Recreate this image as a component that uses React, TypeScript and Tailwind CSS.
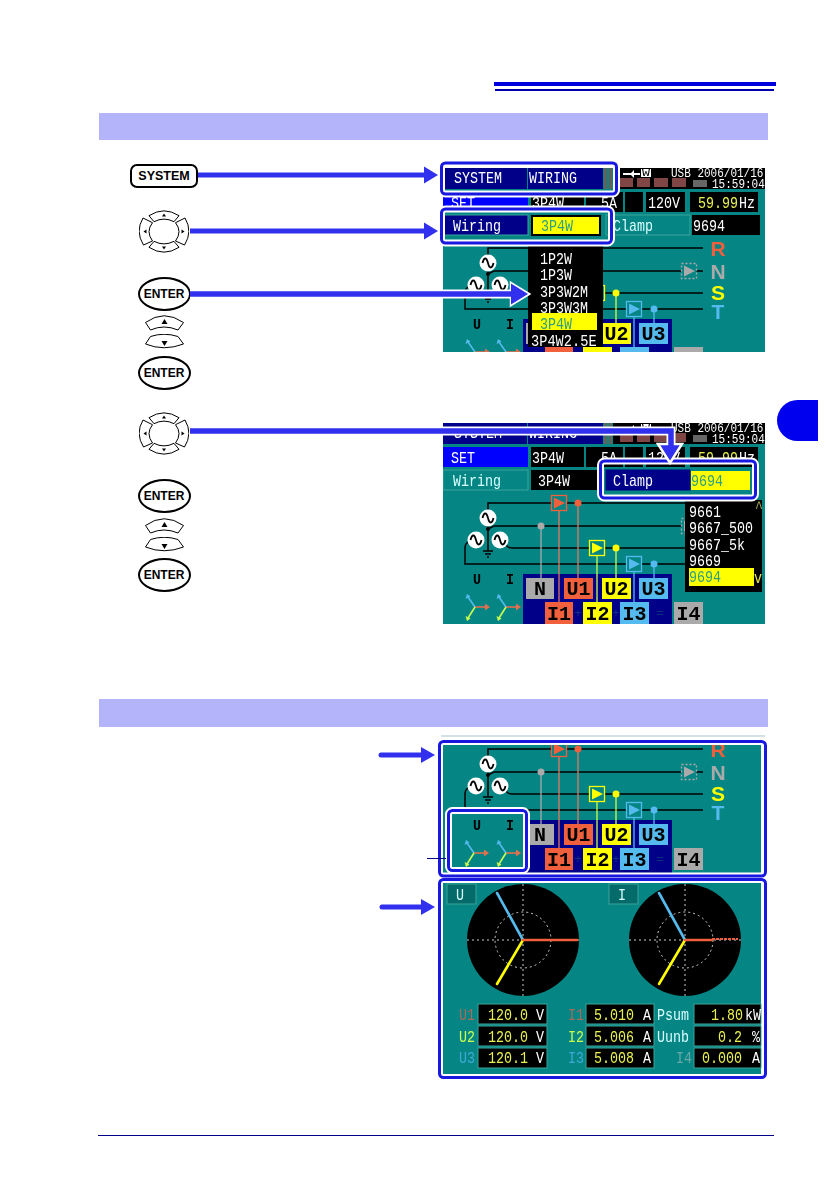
import React from "react";

const TEAL = "#068585";
const NAVY = "#000088";
const RED = "#f0603c";
const YELLOW = "#ffff00";
const LIME = "#c8ff50";
const SKY = "#55bbee";
const GREY = "#aaaaaa";
const FRAME = "#1818e0";

interface LabelProps {
  x: number;
  y: number;
  s: string;
  fill?: string;
  cw?: number;
  size?: number;
  bold?: boolean;
}

// Screen text: the instrument font is narrow and tall, so squeeze it to a char width
const Label = ({ x, y, s, fill = "#ffffff", cw = 8, size = 17, bold }: LabelProps) => (
  <text
    x={x}
    y={y}
    fill={fill}
    fontSize={size}
    fontWeight={bold ? 700 : 400}
    textLength={s.length * cw}
    lengthAdjust="spacingAndGlyphs"
  >
    {s}
  </text>
);

// Rounded callout frame with a white halo
const Frame = ({ x, y, w, h }: { x: number; y: number; w: number; h: number }) => (
  <>
    <rect x={x} y={y} width={w} height={h} rx={4} fill="none" stroke="#ffffff" strokeWidth={7} />
    <rect x={x} y={y} width={w} height={h} rx={4} fill="none" stroke={FRAME} strokeWidth={3} />
  </>
);

const Source = ({ x, y }: { x: number; y: number }) => (
  <>
    <circle cx={x} cy={y} r={8.5} fill="#ffffff" />
    <path d={`M${x - 5.5} ${y}c1.5 -6 4 -6 5.5 0s4 6 5.5 0`} fill="none" stroke="#000000" strokeWidth={1.8} />
  </>
);

const Sensor = ({ x, y, color, dashed }: { x: number; y: number; color: string; dashed?: boolean }) => (
  <>
    <rect
      x={x - 7.5}
      y={y - 7.5}
      width={15}
      height={15}
      fill={TEAL}
      stroke={color}
      strokeWidth={1.3}
      strokeDasharray={dashed ? "2 2" : undefined}
    />
    <path d={`M${x - 5} ${y - 5.5}L${x + 6} ${y}L${x - 5} ${y + 5.5}Z`} fill={color} />
  </>
);

const VectorIcon = ({ x, y }: { x: number; y: number }) => (
  <>
    <path d={`M${x} ${y}H${x + 11}`} stroke="#e07050" strokeWidth={1.6} />
    <path d={`M${x + 15} ${y}l-5 -3.5v7Z`} fill="#e07050" />
    <path d={`M${x} ${y}L${x - 7} ${y - 10}`} stroke={SKY} strokeWidth={1.6} />
    <path d={`M${x - 8} ${y - 13}l-1.5 5l5 -2.5Z`} fill={SKY} />
    <path d={`M${x} ${y}L${x - 7} ${y + 11}`} stroke={LIME} strokeWidth={1.6} />
    <path d={`M${x - 8} ${y + 14}l-1.5 -5l5 2.5Z`} fill={LIME} />
  </>
);

const Chip = ({ x, y, w, h, color, s }: { x: number; y: number; w: number; h: number; color: string; s?: string }) => (
  <>
    <rect x={x} y={y} width={w} height={h} fill={color} />
    {s && <Label x={x + (w - s.length * 12) / 2} y={y + h - 4} s={s} fill="#000000" cw={12} size={21} bold />}
  </>
);

const Legend = ({ x }: { x: number }) => (
  <>
    <Label x={473} y={830} s="U" fill="#000000" cw={8} size={15} bold />
    <Label x={506} y={830} s="I" fill="#000000" cw={8} size={15} bold />
    <VectorIcon x={x} y={853} />
    <VectorIcon x={506} y={853} />
  </>
);

interface DiagramProps {
  rails?: boolean;
  legend?: boolean;
  currents?: boolean;
}

// Wiring diagram, drawn in the coordinates of the section 2 panel
const WiringDiagram = ({ rails = true, legend = true, currents = true }: DiagramProps) => (
  <>
    <g fill="none" stroke="#000000" strokeWidth={1.5}>
      <path d="M488 756V749H703" />
      <path d="M488 775L494 772H703" />
      <path d="M505 789Q507 794 512 794H703" />
      <path d="M468 788Q465 790 465 794V810H703" />
      <path d="M488 764V797" />
      <path d="M483 797h10M485 800h6M487 803h2" />
    </g>
    <rect x={523} y={820} width={149} height={60} fill={NAVY} />
    <path d="M541 772V825" stroke={GREY} strokeWidth={1.3} />
    <path d="M578 749V825M559 749V848" stroke="#e07860" strokeWidth={1.3} />
    <path d="M616 794V825M597 794V848" stroke={LIME} strokeWidth={1.3} />
    <path d="M654 810V825M634 810V848" stroke={SKY} strokeWidth={1.3} />
    <circle cx={541} cy={772} r={3.5} fill={GREY} />
    <circle cx={578} cy={749} r={3.5} fill={RED} />
    <circle cx={616} cy={794} r={3.5} fill={YELLOW} />
    <circle cx={654} cy={810} r={3.5} fill={SKY} />
    <Sensor x={559} y={749} color={RED} />
    <Sensor x={597} y={794} color={YELLOW} />
    <Sensor x={634} y={810} color={SKY} />
    <Sensor x={689} y={772} color={GREY} dashed />
    <Source x={488} y={764} />
    <Source x={476} y={786} />
    <Source x={500} y={786} />
    <circle cx={488} cy={775} r={2} fill="#000000" />
    {rails && (
      <g className="font-['Liberation_Sans']" fontSize={21} fontWeight={700} textAnchor="middle">
        <text x={718} y={757} fill={RED}>R</text>
        <text x={718} y={780} fill={GREY}>N</text>
        <text x={718} y={801} fill={YELLOW}>S</text>
        <text x={718} y={820} fill={SKY}>T</text>
      </g>
    )}
    <Chip x={526} y={824} w={28} h={21} color={GREY} s={currents ? "N" : undefined} />
    <Chip x={564} y={824} w={29} h={21} color={RED} s={currents ? "U1" : undefined} />
    <Chip x={602} y={824} w={29} h={21} color={YELLOW} s="U2" />
    <Chip x={639} y={824} w={29} h={21} color={SKY} s="U3" />
    <Chip x={545} y={848} w={28} h={22} color={RED} s={currents ? "I1" : undefined} />
    <Chip x={583} y={848} w={29} h={22} color={YELLOW} s={currents ? "I2" : undefined} />
    <Chip x={620} y={848} w={29} h={22} color={SKY} s={currents ? "I3" : undefined} />
    <Chip x={674} y={848} w={29} h={22} color={GREY} s={currents ? "I4" : undefined} />
    {currents && (
      <>
        <Label x={574} y={863} s="+" fill="#10307a" cw={8} size={13} />
        <Label x={612} y={863} s="+" fill="#10307a" cw={8} size={13} />
        <Label x={656} y={863} s="=" fill="#10307a" cw={8} size={13} />
      </>
    )}
    {legend && <Legend x={475} />}
  </>
);

const Cell = ({ x, y, w, h, fill = "#000000" }: { x: number; y: number; w: number; h: number; fill?: string }) => (
  <rect x={x} y={y} width={w} height={h} fill={fill} stroke="#3aa39a" strokeWidth={1} />
);

const LIST_WIRING = ["1P2W", "1P3W", "3P3W2M", "3P3W3M", "3P4W", "3P4W2.5E"];
const LIST_CLAMP = ["9661", "9667_500", "9667_5k", "9669", "9694"];

// SYSTEM > WIRING settings screen, with the Wiring or the Clamp list opened
const SettingsScreen = ({ mode }: { mode: "wiring" | "clamp" }) => {
  const wiring = mode === "wiring";
  const height = wiring ? 198 : 218;
  const bottom = wiring ? 352 : 369;
  const id = `clip-${mode}`;
  return (
    <svg width={340} height={height} viewBox={`436 158 340 ${height}`} className="font-['Liberation_Mono'] blur-[0.35px]">
      <clipPath id={id}>
        <rect x={443} y={168} width={322} height={bottom - 168} />
      </clipPath>
      <g clipPath={`url(#${id})`}>
        <rect x={443} y={168} width={322} height={bottom - 168} fill={TEAL} />
        {/* header */}
        <rect x={443} y={168} width={84} height={21} fill={NAVY} />
        <rect x={528} y={168} width={75} height={21} fill={NAVY} />
        <path d="M605 168v21M608 168v21M611 168v21" stroke="#7a5a50" strokeWidth={1.6} />
        <rect x={613} y={168} width={152} height={21} fill="#000000" />
        <Label x={454} y={183} s="SYSTEM" />
        <Label x={529} y={183} s="WIRING" />
        <path d="M623 173h8l3 -3v3h6v2h-6v3l-3 -3h-8Z" fill="#ffffff" />
        <rect x={641} y={169} width={10} height={8} fill="#ffffff" />
        <Label x={642} y={176} s="W" fill="#000000" cw={8} size={10} />
        <Label x={671} y={177} s="USB 2006/01/16" cw={6.6} size={12} />
        <Label x={712} y={188} s="15:59:04" cw={6.6} size={12} />
        <path d="M620 178h13v9h-13ZM637 178h13v9h-13ZM654 178h14v9h-14ZM672 178h14v9h-14Z" fill="#804545" />
        <rect x={693} y={180} width={14} height={7} fill="#666666" />
        {/* status row */}
        <rect x={443} y={192} width={85} height={20} fill="#0000ff" />
        <Label x={451} y={208} s="SET" />
        <rect x={531} y={192} width={53} height={20} fill="#000000" />
        <Label x={532} y={208} s="3P4W" />
        <rect x={586} y={192} width={37} height={20} fill="#000000" />
        <Label x={601} y={208} s="5A" />
        <rect x={625} y={192} width={18} height={20} fill="#000000" />
        <rect x={646} y={192} width={39} height={20} fill="#000000" />
        <Label x={648} y={208} s="120V" />
        <rect x={690} y={192} width={68} height={20} fill="#000000" />
        <Label x={698} y={208} s="59.99" fill="#e8f050" />
        <Label x={739} y={208} s="Hz" />
        {/* setting row */}
        <rect x={443} y={215} width={85} height={20} fill={wiring ? NAVY : TEAL} stroke="#3aa39a" />
        <Label x={453} y={231} s="Wiring" fill={wiring ? "#ffffff" : "#d8ffff"} />
        {wiring ? (
          <>
            <rect x={531} y={215} width={70} height={21} fill="#000000" />
            <rect x={533} y={217} width={66} height={17} fill={YELLOW} />
            <Label x={541} y={231} s="3P4W" fill="#2f9f80" />
          </>
        ) : (
          <>
            <rect x={531} y={215} width={70} height={20} fill="#000000" />
            <Label x={538} y={231} s="3P4W" />
          </>
        )}
        <rect x={606} y={215} width={84} height={20} fill={wiring ? TEAL : NAVY} stroke={wiring ? "#3aa39a" : NAVY} />
        <Label x={613} y={231} s="Clamp" fill={wiring ? "#d8ffff" : "#ffffff"} />
        {wiring ? (
          <>
            <rect x={692} y={215} width={68} height={20} fill="#000000" />
            <Label x={693} y={231} s="9694" />
          </>
        ) : (
          <>
            <rect x={691} y={216} width={59} height={19} fill={YELLOW} />
            <Label x={691} y={231} s="9694" fill="#2f9f80" />
          </>
        )}
        <g transform="translate(0 -501)">
          <WiringDiagram rails={wiring} currents={!wiring} />
        </g>
        {wiring ? (
          <>
            <rect x={528} y={246} width={75} height={101} fill="#000000" />
            <rect x={532} y={313} width={65} height={17} fill={YELLOW} />
            {LIST_WIRING.map((item, i) => (
              <Label
                key={item}
                x={item.length > 6 ? 531 : 540}
                y={264 + i * 16.3}
                s={item}
                cw={item.length > 6 ? 8.2 : 8}
                fill={item === "3P4W" ? "#2f9f80" : "#ffffff"}
              />
            ))}
          </>
        ) : (
          <>
            <rect x={685} y={245} width={77} height={92} fill="#000000" />
            <rect x={689} y={313} width={65} height={18} fill={YELLOW} />
            {LIST_CLAMP.map((item, i) => (
              <Label key={item} x={689} y={262 + i * 16.3} s={item} fill={item === "9694" ? "#2f9f80" : "#ffffff"} />
            ))}
            <Label x={755} y={258} s="^" fill="#a8a850" />
            <Label x={754} y={328} s="v" fill="#e8e850" />
          </>
        )}
      </g>
      {wiring ? (
        <>
          <Frame x={441.5} y={163} w={175} h={31} />
          <Frame x={441.5} y={209} w={170} h={34} />
        </>
      ) : (
        <Frame x={600.5} y={206} w={155} h={37} />
      )}
    </svg>
  );
};

const Phasor = ({ cx, clipped }: { cx: number; clipped?: boolean }) => (
  <>
    <circle cx={cx} cy={940} r={56} fill="#000000" />
    <g fill="none" stroke="#cccccc" strokeWidth={1} strokeDasharray="2 3">
      <circle cx={cx} cy={940} r={28} />
      <path d={`M${cx - 56} 940H${cx + 56}M${cx} 884V996`} />
    </g>
    <g strokeWidth={2.6} strokeLinecap="round">
      <path d={`M${cx} 940L${cx - 26} 893`} stroke={SKY} />
      <path d={`M${cx} 940L${cx - 26} 984`} stroke={YELLOW} />
      <path d={`M${cx} 940H${clipped ? cx + 27 : cx + 54}`} stroke={RED} />
    </g>
    {clipped && <path d={`M${cx + 27} 939H${cx + 53}`} stroke={RED} strokeWidth={2} strokeDasharray="3 1" />}
  </>
);

const READINGS = [
  { l1: "U1", c1: "#a86a5a", v1: "120.0", u1: "V", l2: "I1", v2: "5.010", l3: "Psum", c3: "#d8ffff", x3: 657, v3: "1.80", xv3: 711, u3: "kW", xu3: 745, y: 1020, top: 1004 },
  { l1: "U2", c1: LIME, v1: "120.0", u1: "V", l2: "I2", v2: "5.006", l3: "Uunb", c3: "#d8ffff", x3: 657, v3: "0.2", xv3: 718, u3: "%", xu3: 752, y: 1042, top: 1026 },
  { l1: "U3", c1: "#40a8d8", v1: "120.1", u1: "V", l2: "I3", v2: "5.008", l3: "I4", c3: "#6aa8a8", x3: 676, v3: "0.000", xv3: 702, u3: "A", xu3: 752, y: 1063, top: 1048 },
];

// Panel with the phasor circles and the readings underneath
const VectorPanel = () => (
  <svg width={340} height={203} viewBox="436 878 340 203" className="font-['Liberation_Mono'] blur-[0.35px]">
    <rect x={443} y={882} width={318} height={192} fill={TEAL} />
    <Phasor cx={523} />
    <Phasor cx={685} clipped />
    <rect x={447} y={884} width={29} height={20} fill="#046a6a" stroke="#3aa39a" />
    <Label x={456} y={900} s="U" fill="#d8ffff" />
    <rect x={609} y={884} width={29} height={20} fill="#046a6a" stroke="#3aa39a" />
    <Label x={618} y={900} s="I" fill="#d8ffff" />
    {READINGS.map((row, i) => (
      <g key={row.l1}>
        <Label x={459} y={row.y} s={row.l1} fill={row.c1} />
        <Cell x={478} y={row.top} w={69} h={20} />
        <Label x={488} y={row.y} s={row.v1} fill="#e8f050" />
        <Label x={536} y={row.y} s={row.u1} />
        <Label x={568} y={row.y} s={row.l2} fill={["#a86a5a", LIME, "#40a8d8"][i]} />
        <Cell x={586} y={row.top} w={68} h={20} />
        <Label x={594} y={row.y} s={row.v2} fill="#e8f050" />
        <Label x={643} y={row.y} s="A" />
        <Label x={row.x3} y={row.y} s={row.l3} fill={row.c3} />
        <Cell x={694} y={row.top} w={67} h={20} />
        <Label x={row.xv3} y={row.y} s={row.v3} fill="#e8f050" />
        <Label x={row.xu3} y={row.y} s={row.u3} />
      </g>
    ))}
    <Frame x={439.5} y={879.5} w={326} h={198} />
  </svg>
);

const ConnectionPanel = () => (
  <svg width={340} height={145} viewBox="436 733 340 145" className="font-['Liberation_Mono'] blur-[0.35px]">
    <clipPath id="clip-connection">
      <rect x={443} y={745} width={318} height={129} />
    </clipPath>
    <path d="M441 736H765" stroke="#a8c4cc" strokeWidth={1} />
    <g clipPath="url(#clip-connection)">
      <rect x={443} y={745} width={318} height={129} fill={TEAL} />
      <WiringDiagram legend={false} />
    </g>
    <rect x={449} y={811} width={77} height={60} fill={TEAL} />
    <Legend x={474} />
    <Frame x={448.5} y={810.5} w={78} h={60} />
    <Frame x={439.5} y={741.5} w={326} h={134.5} />
  </svg>
);

const EnterKey = ({ className }: { className: string }) => (
  <div className={`flex h-[34px] w-[53px] items-center justify-center rounded-[50%] border-[2.5px] border-black bg-white ${className}`}>
    <span className="font-['Liberation_Sans'] text-[12px] font-bold text-black">ENTER</span>
  </div>
);

const UpKey = ({ className }: { className: string }) => (
  <svg width={39} height={16} viewBox="0 0 39 16" className={className}>
    <path d="M0.5 7.5Q19 -6 38.5 7.5L33 15Q19 9 5.5 15Z" fill="#ffffff" stroke="#000000" strokeWidth={1} />
    <path d="M19.5 4L16.5 9H22.5Z" fill="#000000" />
  </svg>
);

const DownKey = ({ className }: { className: string }) => (
  <svg width={39} height={16} viewBox="0 0 39 16" className={className}>
    <path d="M5.5 2.5Q19 -2 33 2.5L38.5 10Q19 17.5 0.5 10Z" fill="#ffffff" stroke="#000000" strokeWidth={1} />
    <path d="M19.5 12L16.5 7H22.5Z" fill="#000000" />
  </svg>
);

const CursorPad = ({ className }: { className: string }) => (
  <svg width={50} height={43} viewBox="0 0 50 43" className={className}>
    <g fill="#ffffff" stroke="#000000" strokeWidth={1}>
      <path d="M10 5.7Q25 -4 40 5.7L35 11.7Q25 6.5 15 11.7Z" />
      <path d="M10 37.3Q25 47 40 37.3L35 31.3Q25 36.5 15 31.3Z" />
      <path d="M4 8Q-4 21.5 4.5 35L13.5 31Q6.5 21.5 13.5 12.7Z" />
      <path d="M46 8Q54 21.5 45.5 35L36.5 31Q43.5 21.5 36.5 12.7Z" />
    </g>
    <g fill="#000000">
      <path d="M25 3.5L23 6.5H27Z" />
      <path d="M25 39.5L23 36.5H27Z" />
      <path d="M4.5 21.5L7.5 19.5V23.5Z" />
      <path d="M45.5 21.5L42.5 19.5V23.5Z" />
    </g>
  </svg>
);

const ARROW = "#3030ee";

// Callout arrows run from the keys over the screens
const Arrows = () => (
  <svg width={832} height={1180} viewBox="0 0 832 1180" className="pointer-events-none absolute left-0 top-0">
    <path d="M198 175H426" stroke={ARROW} strokeWidth={5} />
    <path d="M424 166.5L438 175L424 183.5Z" fill={ARROW} />
    <path d="M190 231H426" stroke={ARROW} strokeWidth={5} />
    <path d="M424 222.5L438 231L424 239.5Z" fill={ARROW} />
    <path d="M190 294H513" stroke="#ffffff" strokeWidth={9} />
    <path d="M511 283L529 294L511 305Z" fill={ARROW} stroke="#ffffff" strokeWidth={2.5} />
    <path d="M190 294H513" stroke={ARROW} strokeWidth={5.5} />
    <path d="M511 283.5L528 294L511 304.5Z" fill={ARROW} />
    <path d="M443 431H671V446" fill="none" stroke="#ffffff" strokeWidth={9} />
    <path d="M658 444L670 463L682 444Z" fill={ARROW} stroke="#ffffff" strokeWidth={2.5} />
    <path d="M190 431H671V446" fill="none" stroke={ARROW} strokeWidth={5.5} />
    <path d="M381 755H424" stroke={ARROW} strokeWidth={5} strokeLinecap="round" />
    <path d="M421 747L435 755L421 763Z" fill={ARROW} />
    <path d="M382 907H424" stroke={ARROW} strokeWidth={5} strokeLinecap="round" />
    <path d="M421 899L435 907L421 915Z" fill={ARROW} />
    <path d="M427 858.5H446" stroke={NAVY} strokeWidth={1} />
  </svg>
);

const App: React.FC = () => {
  return (
    <div className="relative h-[1180px] w-[832px] overflow-hidden bg-white">
      {/* running head rule */}
      <div className="ml-[494px] w-[282px] pt-[82px]">
        <div className="h-[4px] bg-[#0000dc]" />
        <div className="ml-px mt-[3px] h-[2px] w-[279px] bg-[#0000aa]" />
      </div>

      <div className="ml-[99px] mt-[22px] h-[27px] w-[669px] bg-[#b4b4fa]" />
      <div className="flex h-[559px]">
        <div className="ml-[130px] flex w-[68px] flex-col items-center">
          <div className="mt-[24px] flex h-[24px] w-[68px] items-center justify-center rounded-[7px] border-[2.5px] border-black">
            <span className="font-['Liberation_Sans'] text-[12.5px] font-bold text-black">SYSTEM</span>
          </div>
          <CursorPad className="mt-[22px]" />
          <EnterKey className="mt-[24px]" />
          <UpKey className="mt-[4px]" />
          <DownKey className="mt-[3px]" />
          <EnterKey className="mt-[6px]" />
          <CursorPad className="mt-[22px]" />
          <EnterKey className="mt-[24px]" />
          <UpKey className="mt-[5px]" />
          <DownKey className="mt-[3px]" />
          <EnterKey className="mt-[5px]" />
        </div>
        <div className="ml-[238px] flex flex-col pt-[18px]">
          <SettingsScreen mode="wiring" />
          <div className="mt-[57px]">
            <SettingsScreen mode="clamp" />
          </div>
        </div>
      </div>

      <div className="ml-[99px] h-[28px] w-[669px] bg-[#b4b4fa]" />
      <div className="ml-[436px] flex flex-col pt-[6px]">
        <ConnectionPanel />
        <VectorPanel />
      </div>

      <div className="ml-[98px] mt-[54px] h-px w-[676px] bg-[#000088]" />

      {/* chapter tab on the page edge */}
      <div className="absolute left-[777px] top-[400px] h-[41px] w-[41px] rounded-l-full bg-[#0000ee]" />
      <Arrows />
    </div>
  );
};

export default App;
